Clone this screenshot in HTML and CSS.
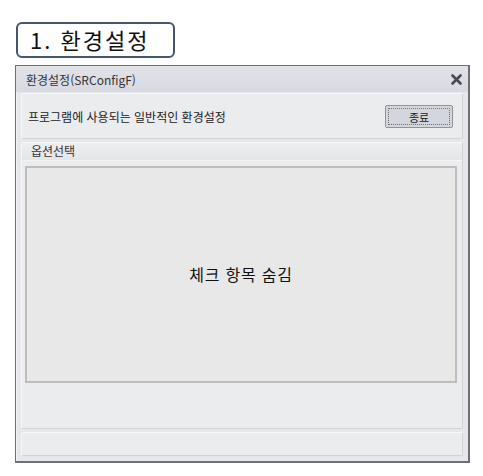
FILE: index.html
```html
<!DOCTYPE html>
<html lang="ko">
<head>
    <meta charset="UTF-8">
    <meta name="viewport" content="width=device-width, initial-scale=1.0">
    <title>환경설정</title>
    <link rel="stylesheet" href="styles.css">
</head>
<body>
    <div class="label">1. 환경설정</div>
    <div class="win">
        <div class="titlebar">
            <span class="title">환경설정(SRConfigF)</span>
            <svg class="close" width="11" height="11" viewBox="0 0 11 11">
                <path d="M1.5 1.5 L9.5 9.5 M9.5 1.5 L1.5 9.5" stroke="#4a4a55" stroke-width="2.6" stroke-linecap="round"/>
            </svg>
        </div>
        <div class="winbody">
            <div class="panel toppanel">
                <span>프로그램에 사용되는 일반적인 환경설정</span>
                <button class="btn">종료</button>
            </div>
            <div class="panel group">
                <div class="grouphd">옵션선택</div>
                <div class="checkbox">체크 항목 숨김</div>
            </div>
            <div class="panel status"></div>
        </div>
    </div>
</body>
</html>
```

FILE: styles.css
```css
body{
    margin: 0;padding: 0;
    background: #fff;
    font-family: "Noto Sans CJK KR", "Noto Sans", sans-serif;
    color: #222;
}
.label{
    margin: 22px 0 0 16px;
    width: 143px;
    height: 32px;
    border: 2px solid #46566e;
    border-radius: 6px;
    font-size: 22px;
    line-height: 31px;
    letter-spacing: 2px;
    padding-left: 12px;
    color: #111;
}
.win{
    margin: 7px 0 0 15px;
    width: 455px;
    height: 398px;
    border: 1px solid #6e6e78;
    border-right-width: 2px;
    border-bottom-width: 2px;
    background: #e3e4e8;
    display: flex;
    flex-direction: column;
    box-sizing: border-box;
}
.titlebar{
    height: 26px;
    display: flex;
    align-items: center;
    justify-content: space-between;
    padding: 0 6px 0 10px;
    background: linear-gradient(#e2e3e9, #d9dae1);
    flex-shrink: 0;
}
.title{
    font-size: 12px;
    color: #333;
}
.close{
    margin-top: 1px;
}
.winbody{
    flex: 1;
    display: flex;
    flex-direction: column;
    gap: 3px;
    padding: 1px 5px 5px 4px;
    border-left: 1px solid #f2f2f4;
    background: #e6e7ea;
}
.panel{
    border: 1px solid #d2d3d7;
    border-top-color: #f7f7f9;
    border-left-color: #f7f7f9;
    background: #ebecee;
    border-radius: 2px;
}
.toppanel{
    height: 44px;
    display: flex;
    align-items: center;
    justify-content: space-between;
    padding: 0 9px 0 6px;
    font-size: 12px;
    color: #222;
    flex-shrink: 0;
}
.btn{
    width: 68px;
    height: 23px;
    border: 1px solid #8f929a;
    border-radius: 2px;
    background: #d4d6de;
    outline: 1px dotted #707070;
    outline-offset: -4px;
    font-family: inherit;
    font-size: 11px;
    color: #222;
    margin-top: 1px;
}
.group{
    flex: 1;
    display: flex;
    flex-direction: column;
    padding: 0 5px 45px 3px;
}
.grouphd{
    height: 17px;
    font-size: 12px;
    line-height: 15px;
    padding-left: 9px;
    color: #333;
    margin: 0 -5px 5px -3px;
    background: linear-gradient(#eeeff1, #e4e5e8);
    border-bottom: 1px solid #f4f4f6;
}
.checkbox{
    flex: 1;
    border: 2px solid #bdbdbd;
    background: #e8e8e8;
    display: flex;
    align-items: center;
    justify-content: center;
    font-size: 16px;
    letter-spacing: 0.8px;
    color: #111;
    padding-bottom: 2px;
}
.status{
    height: 22px;
    flex-shrink: 0;
}
```
